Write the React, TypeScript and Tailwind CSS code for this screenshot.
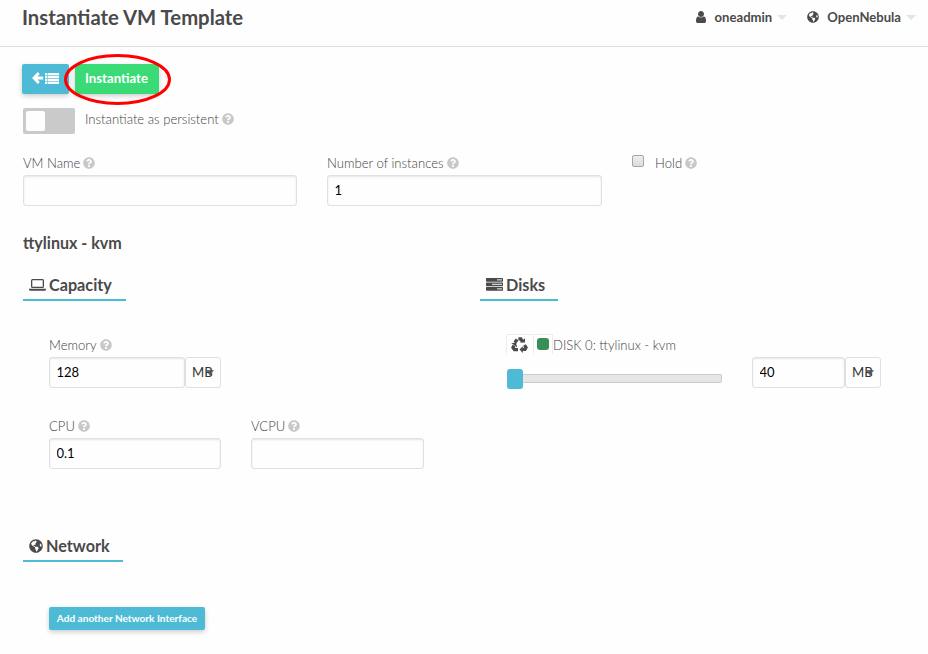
import type { ReactNode } from "react";
import { FaGlobeAmericas, FaQuestionCircle } from "react-icons/fa";

const UserIcon = () => (
  <svg viewBox="0 0 1792 1792" className="h-[14px] w-[14px]" fill="currentColor">
    <path d="M1536 1399q0 109-62.5 187t-150.5 78h-854q-88 0-150.5-78t-62.5-187q0-85 8.5-160.5t31.5-152 58.5-131 94-89 134.5-34.5q131 128 313 128t313-128q76 0 134.5 34.5t94 89 58.5 131 31.5 152 8.5 160.5zm-256-887q0 159-112.5 271.5t-271.5 112.5-271.5-112.5-112.5-271.5 112.5-271.5 271.5-112.5 271.5 112.5 112.5 271.5z" />
  </svg>
);

const ArrowIcon = () => (
  <svg viewBox="0 0 12 12" className="h-[12px] w-[12px]" fill="none" stroke="currentColor" strokeWidth="2.800">
    <path d="M6.800 1 2 6l4.800 5M2.200 6H11.200" />
  </svg>
);

const ListIcon = () => (
  <svg viewBox="0 0 14 11" className="h-[11px] w-[14px]" fill="currentColor">
    <rect width="14" height="11" opacity="0.35" />
    {[0, 3, 6, 9].map((y) => (
      <g key={y}>
        <rect x="0" y={y} width="2" height="2" />
        <rect x="3" y={y} width="11" height="2" />
      </g>
    ))}
  </svg>
);

const LaptopIcon = () => (
  <svg viewBox="0 0 17 12" className="h-[12px] w-[17px]" fill="currentColor">
    <path fillRule="evenodd" d="M3.5 0h10A1.5 1.5 0 0 1 15 1.500v6A1.500 1.500 0 0 1 13.500 9h-10A1.500 1.500 0 0 1 2 7.500v-6A1.500 1.500 0 0 1 3.500 0zM3.300 1.200v6.600h10.400V1.200z" />
    <path d="M0 9.700h17v.8q0 1.200-1.600 1.200H1.600Q0 11.700 0 10.500z" />
  </svg>
);

const ServerIcon = () => (
  <svg viewBox="0 0 17 13" className="h-[13px] w-[17px]">
    {[0, 4.5, 9].map((y, i) => (
      <g key={y}>
        <rect x="0" y={y} width="17" height="3.700" rx="0.600" fill="#4a4a4a" />
        <rect x={[11, 6, 11][i]} y={y + 1.300} width={[5, 10, 5][i]} height="1.100" fill="#fefefe" opacity="0.85" />
      </g>
    ))}
  </svg>
);

const RecycleIcon = () => (
  <svg viewBox="0 0 17 16" className="h-[16px] w-[17px]" fill="none" stroke="currentColor" strokeWidth="3.300">
    <path d="M3.900 5.800 6 2.300" />
    <path d="M7.400 1.800h2.400l1.700 2.800" />
    <path d="M13.500 8l1.500 2.500-1 1.900h-2.500" />
    <path d="M7 12.600H3.500L2 10.500l1-2" />
    <g fill="currentColor" stroke="none">
      <path d="M9 5.600h5V1.200z" />
      <path d="M11.800 9.200v6.700l-3.300-3.400z" />
      <path d="M.2 6.100l4.800-.2 1.200 4.600z" />
    </g>
  </svg>
);

const Tip = () => <FaQuestionCircle className="h-[12px] w-[12px] shrink-0 text-[#c8c8c8]" />;

const Caret = () => (
  <span className="h-0 w-0 border-x-[5px] border-t-[5px] border-x-transparent border-t-[#e4e4e4]" />
);

const Label = ({ children }: { children: ReactNode }) => (
  <div className="flex h-[18px] items-center gap-[3px] text-[13.100px] font-light leading-[18px] whitespace-nowrap text-[#424242]">
    <span>{children}</span>
    <Tip />
  </div>
);

const Field = ({ value = "", width, name }: { value?: string; width: string; name: string }) => (
  <input
    aria-label={name}
    defaultValue={value}
    className={`${width} block h-[31px] shrink-0 rounded-[3px] border border-[#e0e0e0] bg-[#fefefe] px-[6.500px] pb-[2px] text-[13px] text-black shadow-[inset_0_1px_2px_rgba(10,10,10,0.1)] outline-none`}
  />
);

const Unit = () => (
  <div className="flex h-[31px] w-[36px] items-center rounded-[3px] border border-[#e0e0e0] pl-[6px] text-[13.200px] text-[#333333]">
    <span>MB</span>
    <span className="-ml-[7px] h-0 w-0 border-x-[4px] border-t-[6px] border-x-transparent border-t-[#4a4a4a]/80" />
  </div>
);

const Section = ({ icon, title, width }: { icon: ReactNode; title: string; width: string }) => (
  <h2 className={`${width} flex h-[31px] items-center gap-[3px] border-b-2 border-[#4dbbd5] pl-[6px] text-[16.200px] font-bold leading-[20px]`}>
    {icon}
    <span>{title}</span>
  </h2>
);

export default function App() {
  return (
    <div className="h-[654px] w-[928px] overflow-hidden bg-[#fefefe] font-['Lato',sans-serif] text-[#4a4a4a]">
      <header className="flex h-[47px] items-start justify-between border-b border-[#dedede] pl-[22px] pr-[12px]">
        <h1 className="mt-[4px] text-[20.300px] font-bold leading-[26px]">Instantiate VM Template</h1>
        <nav className="mt-[8px] flex h-[18px] items-center text-[13.100px] font-bold leading-[18px]">
          <UserIcon />
          <span className="ml-[7px] mr-[5px]">oneadmin</span>
          <Caret />
          <FaGlobeAmericas className="ml-[20px] h-[12px] w-[12px]" />
          <span className="ml-[8px] mr-[5px]">OpenNebula</span>
          <Caret />
        </nav>
      </header>
      <main>
        <div className="mt-[17px] flex h-[30px] gap-[6px] pl-[22px]">
          <button aria-label="Back to list" className="flex w-[47px] items-center justify-center rounded-[2px] bg-[#4dbbd5] pb-[2px] text-white shadow-[0_2px_5px_rgba(0,0,0,0.2)]">
            <span className="mr-[1px]"><ArrowIcon /></span>
            <ListIcon />
          </button>
          <div className="relative">
            <button className="h-[30px] w-[84px] rounded-[2px] bg-[#3adb76] pr-[1px] text-[13.200px] font-bold text-white shadow-[0_2px_5px_rgba(0,0,0,0.2)]">
              Instantiate
            </button>
            <svg className="absolute -left-[12px] -top-[12px] h-[54px] w-[110px]" viewBox="0 0 110 54" fill="none">
              <ellipse cx="54.500" cy="27.500" rx="52" ry="24" stroke="#ff0000" strokeWidth="3" />
            </svg>
          </div>
        </div>
        <div className="mt-[14px] flex h-[26px] gap-[10px] pl-[23px]">
          <div className="w-[52px] rounded-[2px] bg-[#cacaca] p-[3px]">
            <div className="h-[20px] w-[19px] rounded-[2px] bg-[#fefefe]" />
          </div>
          <div className="mt-[2px]"><Label>Instantiate as persistent</Label></div>
        </div>
        <div className="mt-[20px] flex h-[52px] pl-[23px]">
          <div className="flex w-[304px] flex-col gap-[3px]">
            <Label>VM Name</Label>
            <Field name="VM Name" width="w-[274px]" />
          </div>
          <div className="flex w-[305px] flex-col gap-[3px]">
            <Label>Number of instances</Label>
            <Field name="Number of instances" value="1" width="w-[275px]" />
          </div>
          <div className="flex items-start gap-[11px]">
            <div className="mt-px h-[12px] w-[12px] rounded-[2px] border border-[#a6a6a6] bg-gradient-to-b from-[#eeeeee] to-[#dcdcdc]" />
            <Label>Hold</Label>
          </div>
        </div>
        <h3 className="mt-[27px] h-[20px] pl-[23px] text-[16.100px] font-bold leading-[20px]">ttylinux - kvm</h3>
        <div className="mt-[17px] flex h-[261px] pl-[23px]">
          <section className="w-[457px]">
            <Section icon={<LaptopIcon />} title="Capacity" width="w-[103px]" />
            <div className="pl-[26px] pt-[35px]">
              <Label>Memory</Label>
              <div className="mt-[3px] flex">
                <Field name="Memory" value="128" width="w-[136px]" />
                <Unit />
              </div>
              <div className="mt-[29px] flex gap-[30px]">
                <div className="flex flex-col gap-[3px]">
                  <Label>CPU</Label>
                  <Field name="CPU" value="0.1" width="w-[172px]" />
                </div>
                <div className="flex flex-col gap-[3px]">
                  <Label>VCPU</Label>
                  <Field name="VCPU" width="w-[173px]" />
                </div>
              </div>
            </div>
          </section>
          <section>
            <Section icon={<ServerIcon />} title="Disks" width="w-[78px]" />
            <div className="flex pl-[26px] pt-[33px]">
              <div className="w-[246px]">
                <div className="flex h-[20px] text-[13.050px] font-light text-[#424242]">
                  <div className="flex w-[28px] items-center justify-center rounded-t-[2px] border border-b-0 border-[#ededed] pr-[1px] text-[#4a4a4a]">
                    <RecycleIcon />
                  </div>
                  <div className="flex w-[19px] items-center justify-center border border-b-0 border-l-0 border-[#ededed]">
                    <div className="mb-[1px] h-[12px] w-[12px] rounded-[3px] bg-[#388e57]" />
                  </div>
                  <span className="leading-[23px]">DISK 0: ttylinux - kvm</span>
                </div>
                <div className="mt-[15px] flex h-[20px] w-[216px] items-start">
                  <div className="ml-[1px] h-[20px] w-[16px] rounded-[3px] bg-[#4dbbd5]" />
                  <div className="mt-[5px] h-[9px] flex-1 rounded-r-[2px] border border-l-0 border-[#cacaca] bg-[#e6e6e6]" />
                </div>
              </div>
              <div className="mt-[23px] flex">
                <Field name="Disk size" value="40" width="w-[93px]" />
                <Unit />
              </div>
            </div>
          </section>
        </div>
        <section className="pl-[23px]">
          <Section icon={<FaGlobeAmericas className="h-[14px] w-[14px]" />} title="Network" width="w-[100px]" />
          <button className="ml-[26px] mt-[45px] block h-[23px] w-[156px] rounded-[2px] bg-[#4dbbd5] text-[10.080px] font-bold text-white shadow-[0_2px_5px_rgba(0,0,0,0.2)]">
            Add another Network Interface
          </button>
        </section>
      </main>
    </div>
  );
}
